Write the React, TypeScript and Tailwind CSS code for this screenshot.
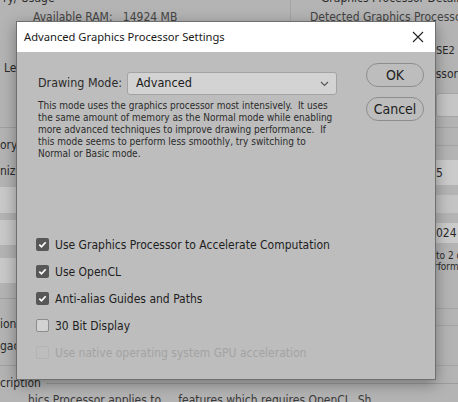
import React from 'react';

const UI = { fontFamily: '"DejaVu Sans Condensed", "DejaVu Sans", sans-serif' };
const TITLE = { fontFamily: '"Noto Sans", "Liberation Sans", sans-serif' };

const DESCRIPTION = [
  'This mode uses the graphics processor most intensively.  It uses',
  'the same amount of memory as the Normal mode while enabling',
  'more advanced techniques to improve drawing performance.  If',
  'this mode seems to perform less smoothly, try switching to',
  'Normal or Basic mode.',
];

const OPTIONS = [
  { label: 'Use Graphics Processor to Accelerate Computation', checked: true, disabled: false },
  { label: 'Use OpenCL', checked: true, disabled: false },
  { label: 'Anti-alias Guides and Paths', checked: true, disabled: false },
  { label: '30 Bit Display', checked: false, disabled: false },
  { label: 'Use native operating system GPU acceleration', checked: false, disabled: true },
];

const CheckBox: React.FC<{ checked: boolean; disabled: boolean }> = ({ checked, disabled }) => {
  if (checked) {
    return (
      <span className="flex h-[13px] w-[13px] items-center justify-center rounded-[2px] bg-[#575757]">
        <svg width="9" height="9" viewBox="0 0 9 9">
          <path d="M1.3 4.7 L3.5 6.8 L7.7 2.2" fill="none" stroke="#ffffff" strokeWidth="1.7" />
        </svg>
      </span>
    );
  }
  return (
    <span
      className={`block h-[13px] w-[13px] rounded-[2px] border ${
        disabled ? 'border-[#b3b3b3] bg-transparent' : 'border-[#8c8c8c] bg-[#d2d2d2]'
      }`}
    />
  );
};

// the preferences page behind the dialog (mostly hidden)
const Background: React.FC = () => (
  <div className="flex h-full flex-col text-[12px] leading-[16px] text-[#2a2a2a]" style={UI}>
    <div className="flex h-[375px] shrink-0">
      {/* left column */}
      <div className="flex w-[291px] flex-col border-r border-[#a4a4a4]">
        <div className="-mt-[10px] h-[16px] whitespace-nowrap pl-[3px]">ry/ Usage</div>
        <div className="mt-[3px] h-[16px] whitespace-nowrap pl-[33px] text-[#444]">Available RAM:&nbsp;&nbsp; 14924 MB</div>
        <div className="mt-[35px] h-[16px] whitespace-nowrap pl-[4px]">Let Photoshop Use:</div>
        <div className="mt-[51px] h-[1px] bg-[#a0a0a0]" />
        <div className="mt-[9px] h-[16px]">ory</div>
        <div className="mt-[10px] h-[16px]">nize</div>
        <div className="mt-[8px] h-[26px] bg-[#c9c9c9]" />
        <div className="mt-[7px] h-[25px] bg-[#c9c9c9]" />
        <div className="mt-[13px] h-[25px] bg-[#c9c9c9]" />
        <div className="mt-[15px] h-[1px] bg-[#a0a0a0]" />
        <div className="mt-[17px] h-[16px]">ion</div>
        <div className="mt-[6px] h-[16px]">gac</div>
        <div className="mt-[11px] h-[1px] bg-[#a0a0a0]" />
      </div>
      {/* right column */}
      <div className="flex min-w-0 flex-1 flex-col">
        <div className="-mt-[10px] h-[16px] whitespace-nowrap pl-[30px]">Graphics Processor Details</div>
        <div className="mt-[3px] h-[16px] whitespace-nowrap pl-[19px] text-[#444]">Detected Graphics Processor:</div>
        <div className="mt-[18px] h-[16px] pl-[145px] text-[11px]">SE2</div>
        <div className="mt-[7px] h-[16px] whitespace-nowrap pl-[115px]">Processor</div>
        <div className="ml-[145px] mt-[11px] h-[24px] w-[40px] shrink-0 rounded-[3px] border border-[#a6a6a6] bg-[#c6c6c6]" />
        <div className="mt-[10px] h-[1px] bg-[#a4a4a4]" />
        <div className="mt-[17px] h-[1px] bg-[#a4a4a4]" />
        <div className="mt-[14px] flex h-[25px] items-center bg-[#cbcbcb] pl-[145px]">5</div>
        <div className="mt-[10px] h-[18px] bg-[#c4c4c4]" />
        <div className="mt-[10px] flex h-[20px] items-center bg-[#cbcbcb] pl-[145px]">024</div>
        <div className="mt-[7px] whitespace-nowrap pl-[145px] text-[10px] leading-[11px]">
          to 2 or more
          <br />
          <span className="-ml-[2px]">rformance</span>
        </div>
        <div className="mt-[36px] h-[1px] bg-[#a4a4a4]" />
        <div className="mt-[16px] h-[1px] bg-[#a4a4a4]" />
        <div className="mt-[39px] h-[1px] bg-[#a4a4a4]" />
      </div>
    </div>

    {/* Description group box */}
    <div className="flex h-[16px] shrink-0 items-center">
      <span>cription</span>
      <span className="ml-[5px] h-[1px] flex-1 bg-[#9c9c9c]" />
    </div>
    <div className="mt-[1px] h-[16px] shrink-0 whitespace-nowrap pl-[28px] text-[#3a3a3a]">
      hics Processor applies to ... features which requires OpenCL. Sh
    </div>
  </div>
);

const App: React.FC = () => {
  return (
    <div className="relative h-[402px] w-[458px] overflow-hidden bg-[#b4b4b4]">
      <Background />

      {/* dialog */}
      <div className="absolute left-[16px] top-[21px] flex h-[359px] w-[420px] flex-col border border-[#6f6f6f] bg-[#bdbdbd] shadow-[0_4px_14px_rgba(0,0,0,0.35)]">
        <div className="flex h-[30px] shrink-0 items-center justify-between bg-white pl-[7px] pr-[11px]">
          <span className="text-[11.2px] text-[#1a1a1a]" style={TITLE}>
            Advanced Graphics Processor Settings
          </span>
          <svg width="12" height="12" viewBox="0 0 12 12">
            <path d="M1 1 L11 11 M11 1 L1 11" stroke="#222" strokeWidth="1.1" />
          </svg>
        </div>

        <div className="flex flex-1" style={UI}>
          <div className="flex flex-1 flex-col pl-[21px]">
            <div className="mt-[20px] flex items-center">
              <span className="w-[89px] text-[12.4px] text-[#2b2b2b]">Drawing Mode:</span>
              <div className="flex h-[23px] w-[210px] items-center justify-between rounded-[3px] border border-[#a3a3a3] bg-[#d3d3d3] pl-[8px] pr-[7px]">
                <span className="text-[12.6px] text-[#1c1c1c]">Advanced</span>
                <svg width="9" height="6" viewBox="0 0 9 6">
                  <path d="M1 1 L4.5 4.5 L8 1" fill="none" stroke="#555" strokeWidth="1.1" />
                </svg>
              </div>
            </div>
            <div className="mt-[5px] text-[10px] leading-[12px] text-[#2b2b2b]">
              {DESCRIPTION.map((line) => (
                <div key={line} className="whitespace-pre">
                  {line}
                </div>
              ))}
            </div>
            <div className="-ml-[2px] mt-[71px] flex flex-col">
              {OPTIONS.map((opt) => (
                <div key={opt.label} className="flex h-[27px] items-center gap-[6px]">
                  <CheckBox checked={opt.checked} disabled={opt.disabled} />
                  <span className={`text-[12px] ${opt.disabled ? 'text-[#a3a3a3]' : 'text-[#1e1e1e]'}`}>
                    {opt.label}
                  </span>
                </div>
              ))}
            </div>
          </div>

          <div className="mr-[11px] mt-[11px] flex flex-col gap-[10px]">
            <button className="h-[24px] w-[58px] rounded-full border border-[#8d8d8d] text-[14px] text-[#1e1e1e]">
              OK
            </button>
            <button className="h-[24px] w-[58px] rounded-full border border-[#8d8d8d] text-[14px] text-[#1e1e1e]">
              Cancel
            </button>
          </div>
        </div>
      </div>
    </div>
  );
};

export default App;
